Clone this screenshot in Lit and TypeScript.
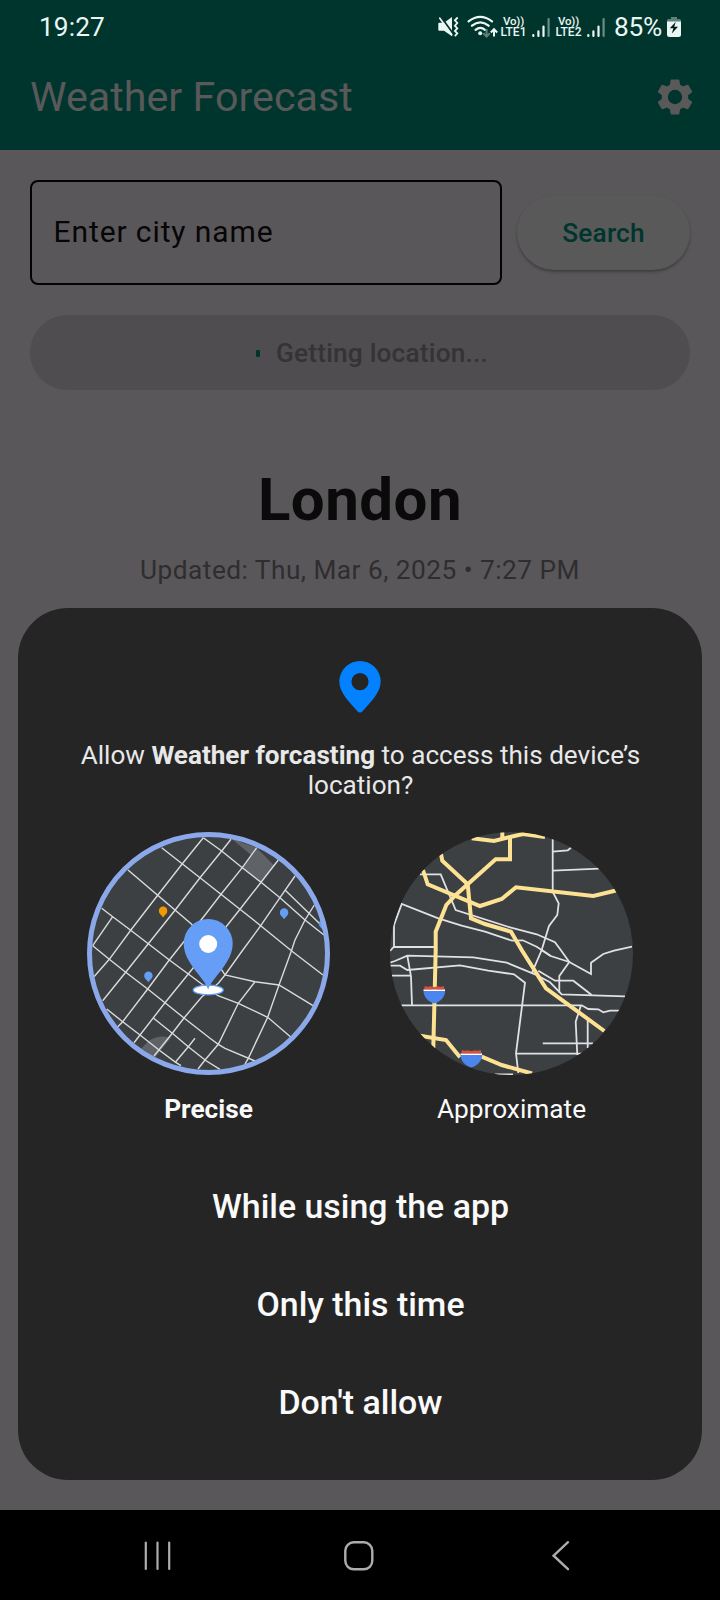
import { LitElement, html, svg, css } from "lit";
import { customElement, property } from "lit/decorators.js";

const PRECISE_STREETS = [
  "M128 870L191.7 924.3L225 975L255 981.7L279 985L313 1005.7",
  "M161.7 847.7L200 877.7L240 909.3L260.7 925.7L293 952L323 975",
  "M203.3 837.7L221.7 851L242.3 867.7L261 882.3L280 897.7L305 920L324 935",
  "M101.7 908.3L112.7 916.7L130.7 930.3L148.3 943.7L169.3 960L188.3 974L201.7 984L218 995.7L238.3 1003.3L267.7 1017.3L291 1037.3",
  "M92.7 945.7L109.3 959.3L125.7 972.3L147.7 989L165 1002.7L184 1018L210 1038.3L218.3 1044.3L225 1048.3L255 1061",
  "M106.7 1009L122.7 1021.7L140 1035L159 1050L175.7 1062.3L181 1065.7",
  "M153.3 1018L172.3 1033.3L188.3 1046.7L205.7 1060.5L220 1069.3",
  "M203.3 837.7L182.3 863.7L157.3 895.7L130.7 930.3L109.3 959.3L94 976.7",
  "M112.7 916.7L92.7 945.7",
  "M231 839.3L221.7 851L200 877.7L175 910.3L148.3 943.7L125.7 972.3L102.7 1000.7",
  "M256.7 847.7L242.3 867.7L221 894.3L205 915L169.3 960L147.7 989L122.7 1021.7L117.3 1027.3",
  "M278.3 860L261 882.3L240 909.3L226.7 926L188.3 974L165 1002.7L140 1035L134 1042.7",
  "M295 876L280 897.7L260.7 925.7L241 952.5L225 975L218.3 983.3L201.7 997L184 1018L172.3 1033.3L154 1056",
  "M195 1038.3L188.3 1046.7L175.7 1061.7",
  "M255 981.7L238.3 1003.3L218.3 1044.3L205 1060L198 1069",
  "M314.3 905L305 920L295 940L291 952L279 985L267.7 1017.3L248.3 1058.3L245 1064",
  "M285 890L309 913.3L320 924",
];

const APPROX_STREETS = [
  "M420 874.3L440.7 874.3L455.7 910L511 927.7L536.7 934.3L555 942.3L560 949L569.3 962L559.3 976L559.3 992.7",
  "M390 951L394 946.7L394 925L401.7 904L438.3 918.3L461.7 925.7L485 931.7L512 940.7L522.7 940.3L536.7 946.7L550.7 956L569.3 962L591 974L591 962.7L603.3 954L614 950.7L632 946.7",
  "M394 947H434",
  "M552.7 839V891.7L558.7 903.3L557.3 915L549 926L541.7 950L531.7 973.3",
  "M541.7 950L550.7 956",
  "M552.7 851.7L567.7 850.3L571 847.7",
  "M552.7 870.7L599.3 868.7",
  "M390 962.7L395 961L407.3 955.7L473.3 957.3L506.7 962.7L535 974.3L550 982.3L561.7 994.3L625 996.3",
  "M538.3 970.7L555 980.7H573.3L591.7 995",
  "M390 965.7H400L407.3 970L460 965.3L488.3 970.7L514 974.3L525 982.7L516 1053.3L518.3 1073",
  "M407.3 955.7L411 976.7L412 1005",
  "M390 975.7H410.7",
  "M400 1005.3H581.7L588.3 1009L598.3 1009.3L603.3 1012.3L610 1010.7H620",
  "M581 1005.3L575.7 1021.7L577.3 1055",
  "M587.7 1020V1048",
  "M542.7 1043.3H593",
  "M516 1053.7H582",
  "M495 1074.3H513",
];

const APPROX_HIGHWAYS = [
  "M471.7 838.3L494 841L510 837L523 834L545 837",
  "M502.3 832V840",
  "M510 837V859.3H495.7L455.7 895L446.3 905L435.7 931.7V950L433.3 1048",
  "M441 854L442.3 860.7L467.7 884.3L471 918.3L485 924L511 931.7L521.7 950L546 988.3L604.3 1031",
  "M423 870L427.7 884.3L480 906L501.7 899L516 887.3L593.3 896L616 890.5",
  "M420 1035.7L446 1040L460 1057.3M481.7 1056.7L501.7 1065L532 1073.5",
];

const miniPin = (x: number, y: number, fill: string) => svg`
  <path fill=${fill} transform="translate(${x} ${y})"
    d="M0 6.4C-1.2 4-4.2 3-4.2-.4A4.2 4.2 0 0 1 4.2-.4C4.2 3 1.2 4 0 6.4Z"/>`;

const shield = (x: number, y: number) => svg`
  <g transform="translate(${x} ${y})">
    <path fill="#4a86ee" d="M-10.8 4.4H10.8C11 10.5 6.5 15.5 0 17.4C-6.5 15.5-11 10.5-10.8 4.4Z"/>
    <path fill="#fff" d="M-10.7 3.2H10.7V4.9H-10.7Z"/>
    <path fill="#d9503f" d="M-9.3 0Q-6.5 1.4-4.3.2Q0 1.6 4.3.2Q6.5 1.4 9.3 0L10.4 3.4H-10.4Z"/>
  </g>`;

@customElement("status-bar")
export class StatusBar extends LitElement {
  static styles = css`
    :host { display: flex; align-items: center; height: 54px; padding: 0 38px 0 39px; color: #ecf6f3; }
    .time { font-size: 26.25px; flex: 1; letter-spacing: 0.1px; }
    .mute { margin-right: 8px; }
    .wifi { margin-right: 2px; }
    .volte { width: 27px; margin-right: 5px; display: flex; flex-direction: column; align-items: center;
      font-size: 12px; font-weight: 500; line-height: 11px; white-space: nowrap; }
    .vo { letter-spacing: -0.2px; font-size: 11.5px; }
    .bars { margin-right: 5px; }
    .bars.last { margin-right: 9px; }
    .pct { font-size: 26.25px; width: 49px; white-space: nowrap; letter-spacing: -0.3px; margin-right: 4px; }
    svg { display: block; flex: none; }
  `;
  private bars(last = false) {
    return html`<svg class="bars ${last ? "last" : ""}" width="18" height="22" viewBox="0 0 18 22">
      <g stroke="#ecf6f3" stroke-width="2.2" stroke-linecap="round">
        <path d="M1.3 19.1V20M6.4 15.4V20M11.5 10.5V20"/>
        <path d="M16.6 3V20" opacity=".45"/>
      </g>
    </svg>`;
  }
  private volte(n: number) {
    return html`<div class="volte"><span class="vo">Vo))</span><span>LTE${n}</span></div>`;
  }
  render() {
    return html`
      <span class="time">19:27</span>
      <svg class="mute" width="21" height="22" viewBox="438 15 21 22">
        <path fill="#ecf6f3" d="M438.3 22.8Q438.3 21.8 439.3 21.8H444L452 16V35.3L444 29.8H439.3Q438.3 29.8 438.3 28.8Z"/>
        <path stroke="#00352e" stroke-width="2" d="M441 16L454 34"/>
        <path stroke="#ecf6f3" stroke-width="1.7" stroke-linecap="round" d="M439.8 17.2L451.8 33.8"/>
        <path fill="none" stroke="#ecf6f3" stroke-width="1.8" stroke-linecap="round" d="M457.2 17L454.9 19.3L457.3 22L454.9 24.7L457.3 27.4L454.9 30L457.3 32.3L455.3 34.6"/>
      </svg>
      <svg class="wifi" width="31" height="24" viewBox="467 14 31 24">
        <g fill="none" stroke="#ecf6f3" stroke-width="2.3" stroke-linecap="round">
          <path d="M468.6 20.3Q480.3 11.4 492 20.3M472 24.7Q480.3 18 488.6 24.7M475.6 28.8Q480.3 25 485 28.8"/>
        </g>
        <circle cx="480.2" cy="32.2" r="2" fill="#ecf6f3"/>
        <path fill="none" stroke="#5d8079" stroke-width="2" d="M486.6 28V35.4M483.4 32.3L486.6 35.6L489.8 32.3"/>
        <path fill="none" stroke="#ecf6f3" stroke-width="2" d="M494 35.5V28.5M490.8 31.5L494 28.2L497.2 31.5"/>
      </svg>
      ${this.volte(1)}${this.bars()}${this.volte(2)}${this.bars(true)}
      <span class="pct">85%</span>
      <svg width="15" height="22" viewBox="667 15.5 15 22">
        <path fill="#5d8079" d="M671 16.5h6v2h2.500q1.500 0 1.500 1.500v2h-14v-2q0-1.500 1.500-1.500h2.500z"/>
        <path fill="#ecf6f3" d="M667 21h14v13q0 2.500-2.500 2.500h-9q-2.500 0-2.500-2.500z"/>
        <path fill="#001f1a" d="M675.800 21.200L669.800 27.800H673.400L671.800 33L678 26.200H674.200Z"/>
      </svg>
    `;
  }
}

@customElement("accuracy-option")
export class AccuracyOption extends LitElement {
  @property() label = "";
  @property() kind = "precise";
  static styles = css`
    :host { display: flex; flex-direction: column; align-items: center; }
    .map { display: block; width: 243px; height: 243px; }
    .label { margin-top: 18px; font-size: 26.25px; line-height: 32px; color: #fafafa; }
    .label.precise { font-weight: 700; }
    .street { fill: none; stroke: #d8dadb; stroke-width: 1.4; }
    .wide { fill: none; stroke: #dfe1e4; stroke-width: 1.8; }
    .highway { fill: none; stroke: #fde293; stroke-width: 4; }
  `;
  private precise() {
    return svg`
      <svg class="map" viewBox="87 832 243 243">
        <defs><clipPath id="c"><circle cx="208.500" cy="953.500" r="119.500"/></clipPath></defs>
        <circle cx="208.500" cy="953.500" r="119.500" fill="#3c4043"/>
        <g clip-path="url(#c)">
          <path fill="#5f6368" d="M232 839L256.700 847.700L274 865.500L261 882.300L242.300 867L251 855Z"/>
          <path fill="#5f6368" d="M136 1054L148 1041.500Q155 1036.500 163 1036.500L171 1037.500L153 1060Z"/>
          ${PRECISE_STREETS.map((d) => svg`<path class="street" d=${d}/>`)}
          ${miniPin(163.1, 911.2, "#f29900")}
          ${miniPin(284.1, 912.8, "#669df6")}
          ${miniPin(148.4, 976, "#669df6")}
          ${miniPin(323, 924, "#669df6")}
        </g>
        <circle cx="208.500" cy="953.500" r="119" fill="none" stroke="#8ba9ea" stroke-width="5"/>
        <ellipse cx="208.200" cy="990" rx="15" ry="4.800" fill="#fff" stroke="#669df6" stroke-width="1.300"/>
        <path fill="#669df6" d="M208.200 989.500C204 977 183.700 963 183.700 943.500A24.500 24.500 0 0 1 232.700 943.500C232.700 963 212.400 977 208.200 989.500Z"/>
        <circle cx="208.200" cy="944" r="9" fill="#fff"/>
      </svg>`;
  }
  private approximate() {
    return svg`
      <svg class="map" viewBox="390 832 243 243">
        <defs><clipPath id="c"><circle cx="511.500" cy="953.500" r="121.500"/></clipPath></defs>
        <g clip-path="url(#c)">
          <path fill="#3c4043" d="M390 832h243v243h-243z"/>
          ${APPROX_STREETS.map((d) => svg`<path class="wide" d=${d}/>`)}
          ${APPROX_HIGHWAYS.map((d) => svg`<path class="highway" d=${d}/>`)}
          ${shield(434.3, 986)}
          ${shield(471.3, 1050)}
        </g>
      </svg>`;
  }
  render() {
    return html`${this.kind === "precise" ? this.precise() : this.approximate()}
      <div class="label ${this.kind}">${this.label}</div>`;
  }
}

@customElement("permission-sheet")
export class PermissionSheet extends LitElement {
  static styles = css`
    :host { display: flex; flex-direction: column; align-items: center; box-sizing: border-box;
      background: #252525; border-radius: 50px; padding-top: 53px; color: #fafafa; }
    .pin { display: block; }
    .question { margin: 27px 0 0; padding-left: 1px; width: 600px; text-align: center; font-size: 26.1px; line-height: 30px; color: #e8e8e8; }
    .choices { display: flex; gap: 60px; margin-top: 32px; }
    .actions { display: flex; flex-direction: column; align-items: center; margin-top: 33px; }
    .action { appearance: none; border: 0; background: none; padding: 0 0 0 1px; height: 98px; font: 500 33.9px/40px Roboto, sans-serif; color: #fafafa; }
  `;
  render() {
    return html`
      <svg class="pin" width="42" height="52" viewBox="0 0 42 52">
        <path fill="#0381fe" fill-rule="evenodd" d="M21 0A20.700 20.700 0 0 1 41.700 20.600C41.700 32 30 43 23.600 50.300Q21 52.800 18.400 50.300C12 43 .3 32 .3 20.600A20.700 20.700 0 0 1 21 0ZM21 12A8.600 8.600 0 1 0 21 29.200A8.600 8.600 0 1 0 21 12Z"/>
      </svg>
      <p class="question">Allow <b>Weather forcasting</b> to access this device’s location?</p>
      <div class="choices">
        <accuracy-option kind="precise" label="Precise"></accuracy-option>
        <accuracy-option kind="approximate" label="Approximate"></accuracy-option>
      </div>
      <div class="actions">
        <button class="action">While using the app</button>
        <button class="action">Only this time</button>
        <button class="action">Don't allow</button>
      </div>
    `;
  }
}

@customElement("app-root")
export class AppRoot extends LitElement {
  static styles = css`
    :host { display: flex; flex-direction: column; position: relative; width: 720px; height: 1600px;
      overflow: hidden; background: #5a575a; font-family: Roboto, sans-serif; }
    .header { background: #00352e; height: 150px; }
    .toolbar { display: flex; align-items: center; justify-content: space-between; height: 86px; padding: 0 23px 0 30px; }
    .title { font-size: 41.25px; font-weight: 400; margin: 0; color: #595959; }
    .content { flex: 1; padding: 30px 30px 0; }
    .row { display: flex; align-items: center; gap: 15px; }
    .field { box-sizing: border-box; flex: 1; height: 105px; border: 2px solid #030303; border-radius: 8px;
      display: flex; align-items: center; padding: 0 0 3px 21.5px; font-size: 30px; letter-spacing: 0.9px; color: #060606; }
    .search { display: flex; align-items: center; justify-content: center; width: 173px; height: 75px; border-radius: 38px;
      background: #595959; color: #00352e; font-size: 26.25px; font-weight: 500; letter-spacing: 0.2px;
      box-shadow: 0 2px 3px rgba(0, 0, 0, 0.3); }
    .locating { display: flex; align-items: center; justify-content: center; gap: 16px; margin-top: 30px; height: 75px; padding-left: 24px; box-sizing: border-box;
      border-radius: 38px; background: #4f4d4f; color: #343335; font-size: 26.25px; font-weight: 500; letter-spacing: 0.2px; }
    .tick { width: 4px; height: 7px; margin-top: 2px; border-radius: 1px; background: #00352e; }
    .city { margin: 75px 0 0; text-align: center; font-size: 60px; line-height: 70px; font-weight: 700; letter-spacing: 0.5px; color: #0a0a0a; }
    .updated { margin: 20px 0 0; text-align: center; font-size: 26.25px; line-height: 30px; letter-spacing: 0.47px; color: #2f2d2f; }
    .sheet { position: absolute; left: 18px; right: 18px; top: 608px; height: 872px; }
    .nav { height: 90px; background: #000; display: flex; align-items: center; box-sizing: border-box; padding-top: 1px; }
    .nav svg { display: block; fill: none; stroke: #adadad; stroke-linecap: round; }
    .recents { margin-left: 143px; }
    .home { margin-left: 171px; }
    .back { margin-left: 177px; }
  `;
  render() {
    return html`
      <header class="header">
        <status-bar></status-bar>
        <div class="toolbar">
          <h1 class="title">Weather Forecast</h1>
          <svg width="44" height="44" viewBox="0 0 24 24" fill="#595959">
            <path d="M19.140 12.940c.04-.3.060-.610.060-.940 0-.320-.020-.640-.070-.940l2.030-1.580c.180-.140.230-.410.120-.610l-1.920-3.320c-.120-.220-.370-.290-.590-.220l-2.390.960c-.5-.380-1.030-.7-1.620-.940l-.360-2.540c-.040-.240-.240-.410-.480-.410h-3.840c-.240 0-.430.170-.470.410l-.360 2.540c-.590.240-1.130.570-1.620.940l-2.390-.960c-.220-.080-.470 0-.590.220L2.740 8.870c-.120.210-.080.470.120.610l2.030 1.580c-.050.300-.090.630-.090.940s.020.640.070.940l-2.030 1.580c-.180.140-.230.410-.120.610l1.920 3.320c.120.220.370.290.590.220l2.390-.960c.5.380 1.030.7 1.620.940l.360 2.540c.050.240.240.410.480.410h3.840c.240 0 .440-.170.470-.410l.360-2.540c.590-.240 1.130-.560 1.620-.940l2.390.960c.220.080.470 0 .590-.220l1.920-3.320c.120-.220.070-.470-.120-.610l-2.010-1.580zM12 15.900a3.900 3.900 0 1 1 0-7.800 3.900 3.900 0 0 1 0 7.800z"/>
          </svg>
        </div>
      </header>
      <main class="content">
        <div class="row">
          <div class="field">Enter city name</div>
          <div class="search">Search</div>
        </div>
        <div class="locating"><span class="tick"></span><span>Getting location...</span></div>
        <h2 class="city">London</h2>
        <p class="updated">Updated: Thu, Mar 6, 2025 • 7:27 PM</p>
      </main>
      <permission-sheet class="sheet"></permission-sheet>
      <nav class="nav">
        <svg class="recents" width="30" height="32" viewBox="0 0 30 32" stroke-width="2.200"><path d="M2.800 2.500V29M14.500 2.500V29M26.200 2.500V29"/></svg>
        <svg class="home" width="30" height="32" viewBox="0 0 30 32" stroke-width="2.400"><rect x="1.300" y="2.300" width="27" height="27" rx="8.500"/></svg>
        <svg class="back" width="20" height="32" viewBox="0 0 20 32" stroke-width="2.400"><path d="M17 2.200L2.600 15.700L17 29.200"/></svg>
      </nav>
    `;
  }
}
